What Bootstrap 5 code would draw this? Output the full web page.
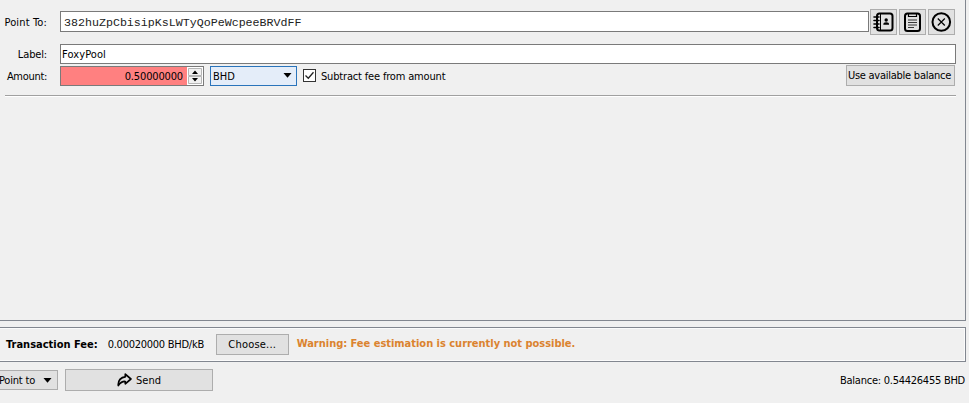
<!DOCTYPE html>
<html lang="en">
<head>
  <meta charset="UTF-8" />
  <meta name="viewport" content="width=device-width, initial-scale=1.0" />
  <title>Send</title>
  <link href="https://cdn.jsdelivr.net/npm/bootstrap@5.3.0/dist/css/bootstrap.min.css" rel="stylesheet" />
  <style>
    :root {
      --frame: #828790;
      --line: #7a7a7a;
    }
    body {
      background-color: #f0f0f0;
      color: #000;
      font-family: "DejaVu Sans Condensed", "DejaVu Sans", sans-serif;
      font-stretch: condensed;
      font-size: 11px;
      line-height: 14px;
      height: 403px;
      overflow: hidden;
      white-space: nowrap;
    }
    .entries {
      width: 966px;
      height: 321px;
      border: solid var(--frame);
      border-width: 0 1px 1px 0;
      padding: 9px 9px 0 5px;
    }
    .caption-col {
      width: 42px;
      margin-right: 13px;
      padding-top: 2px;
      display: flex;
      justify-content: flex-end;
      flex: none;
    }
    .field {
      background: #fff;
      border: 1px solid var(--line);
      display: flex;
      align-items: center;
      padding: 2px 2px 0 1px;
    }
    .row-to { height: 26px; }
    .row-to .field {
      height: 21px;
      width: 809px;
      margin-bottom: 1px;
      font-family: "Liberation Mono", monospace;
      font-size: 11.65px;
      color: #222;
      padding-left: 3px;
    }
    .row-label { height: 20px; margin-top: 9px; }
    .row-amount { height: 21px; margin-top: 1px; }
    .btn.tool {
      --bs-btn-padding-x: 0;
      --bs-btn-padding-y: 0;
      --bs-btn-border-radius: 0;
      --bs-btn-font-size: 11px;
      --bs-btn-line-height: 14px;
      --bs-btn-bg: #e1e1e1;
      --bs-btn-border-color: #adadad;
      --bs-btn-color: #000;
      display: flex;
      align-items: center;
      justify-content: center;
    }
    .btn.tool span { padding-top: 1px; }
    .icon-btn { width: 27px; height: 26px; }
    .icon-group { gap: 2px; margin-right: 1px; }
    .spin { width: 144px; height: 20px; padding: 0; }
    .spin-value {
      background: #ff8080;
      width: 126px;
      height: 18px;
      padding: 3px 4px 0 0;
      text-align: right;
      letter-spacing: -.15px;
    }
    .spin-arrows { width: 14px; height: 16px; margin-left: 1px; }
    .combo {
      width: 87px;
      height: 20px;
      margin-left: 6px;
      background: #e4edf9;
      border-color: #2a74bb;
      padding: 2px 4px 0 2px;
    }
    .combo svg { margin-bottom: 3px; }
    .checkbox {
      width: 13px;
      height: 13px;
      margin: 0 5px 0 6px;
      border: 1px solid #333;
      background: #fff;
    }
    .btn.use-all { width: 109px; height: 21px; margin-right: 1px; }
    .t-use { margin-left: -2px; }
    .divider { height: 2px; margin-top: 9px; border-top: 1px solid #a0a0a0; border-bottom: 1px solid #fff; }
    .fee {
      width: 968px;
      height: 35px;
      margin: 6px 0 0 -2px;
      border: 1px solid var(--frame);
      box-shadow: inset 0 0 0 1px #fbfbfb;
      padding-left: 7px;
    }
    .btn.choose { width: 73px; height: 21px; margin: 0 8px 1px 12px; }
    .warning { color: #db832f; letter-spacing: -.02px; margin-bottom: 2px; }
    .actions { width: 965px; height: 22px; margin-top: 7px; }
    .btn.point { width: 60px; height: 20px; margin-left: -2px; }
    .btn.send { width: 148px; height: 22px; margin-left: 7px; }
    .t-to { letter-spacing: .15px; }
    .t-label { letter-spacing: -.15px; }
    .t-caption { letter-spacing: -.3px; }
    .t-name { letter-spacing: .1px; }
    .t-subtract { letter-spacing: -.17px; padding-top: 2px; }
    .t-use, .balance { letter-spacing: -.25px; }
    .balance { padding-top: 1px; }
    .t-rate { letter-spacing: -.26px; margin-left: 10px; width: 96px; }
    .t-choose { letter-spacing: .2px; }
    .t-point { letter-spacing: -.2px; margin-left: -5px; }
  </style>
</head>
<body>
  <section class="entries">
    <div class="d-flex align-items-center row-to">
      <div class="caption-col"><span class="t-to">Point To:</span></div>
      <div class="field"><span>382huZpCbisipKsLWTyQoPeWcpeeBRVdFF</span></div>
      <div class="d-flex ms-auto icon-group">
        <button class="btn tool icon-btn" aria-label="Address book">
          <svg width="23" height="22" viewBox="0 0 23 22" fill="none" stroke="#000" stroke-width="2">
            <rect x="5" y="2.5" width="15.5" height="17" rx="2.5" />
            <path d="M8.500 2.500v17" stroke-width="1" />
            <path d="M2 6h5M2 9.500h5M2 13h5M2 16.500h5" stroke-width="1.6" stroke-linecap="round" />
            <circle cx="14.2" cy="9" r="1.7" fill="#000" stroke="none" />
            <path d="M11.300 13.700q0-2.400 2.900-2.400t2.900 2.400z" fill="#000" stroke="none" />
          </svg>
        </button>
        <button class="btn tool icon-btn" aria-label="Paste">
          <svg width="23" height="22" viewBox="0 0 23 22" fill="none" stroke="#000" stroke-width="2">
            <rect x="4" y="2.500" width="15" height="17.500" rx="2.500" />
            <path d="M7.500 3v2.500h8V3" stroke-width="1.200" />
            <path d="M7 9h9M7 11.500h9M7 14h9M7 16.500h6" stroke="#222" stroke-width=".9" />
          </svg>
        </button>
        <button class="btn tool icon-btn" aria-label="Clear">
          <svg width="23" height="22" viewBox="0 0 23 22" fill="none" stroke="#000">
            <circle cx="11.3" cy="11" r="8.8" stroke-width="2" />
            <path d="M7.800 7.500l7 7M14.800 7.500l-7 7" stroke-width="1.2" />
          </svg>
        </button>
      </div>
    </div>

    <div class="d-flex align-items-center row-label">
      <div class="caption-col"><span class="t-label">Label:</span></div>
      <div class="field flex-grow-1 h-100"><span class="t-name">FoxyPool</span></div>
    </div>

    <div class="d-flex align-items-center row-amount">
      <div class="caption-col"><span class="t-caption">Amount:</span></div>
      <div class="field spin">
        <div class="spin-value">0.50000000</div>
        <svg class="spin-arrows" viewBox="0 0 14 16">
          <path d="M.5.5h13v7H.5zM.5 8.500h13v7H.5z" fill="#f0f0f0" stroke="#b5b5b5" />
          <path d="M4 6l3-3.500L10 6zM4 10h6l-3 3.500z" fill="#000" />
        </svg>
      </div>
      <div class="field combo justify-content-between">
        <span>BHD</span>
        <svg width="9" height="5" viewBox="0 0 9 5"><path d="M.5 0h8l-4 4.800z" /></svg>
      </div>
      <div class="checkbox d-flex">
        <svg width="11" height="11" viewBox="0 0 11 11" fill="none" stroke="#222" stroke-width="1.3"><path d="M1.500 5.500l2.800 2.800 5.200-6" /></svg>
      </div>
      <span class="t-subtract">Subtract fee from amount</span>
      <button class="btn tool use-all ms-auto"><span class="t-use">Use available balance</span></button>
    </div>
    <div class="divider"></div>
  </section>

  <section class="fee d-flex align-items-center">
    <b>Transaction Fee:</b>
    <span class="t-rate">0.00020000 BHD/kB</span>
    <button class="btn tool choose"><span class="t-choose">Choose...</span></button>
    <b class="warning">Warning: Fee estimation is currently not possible.</b>
  </section>

  <footer class="d-flex align-items-center actions">
    <button class="btn tool point">
      <span class="t-point">Point to</span>
      <svg class="ms-2" width="9" height="5" viewBox="0 0 9 5"><path d="M.5 0h8l-4 4.800z" /></svg>
    </button>
    <button class="btn tool send">
      <svg class="me-1" width="15" height="14" viewBox="0 0 15 14" fill="none" stroke="#000" stroke-width="1.7" stroke-linejoin="round"><path d="M8.300 1.200l5.600 4.800-5.600 4.800V8.500C5 8.200 3.500 9.500 1.300 12.500 .8 7.500 4 4 8.300 3.800z" /></svg>
      <span>Send</span>
    </button>
    <span class="balance ms-auto">Balance: 0.54426455 BHD</span>
  </footer>

  <script src="https://cdn.jsdelivr.net/npm/bootstrap@5.3.0/dist/js/bootstrap.bundle.min.js"></script>
</body>
</html>
